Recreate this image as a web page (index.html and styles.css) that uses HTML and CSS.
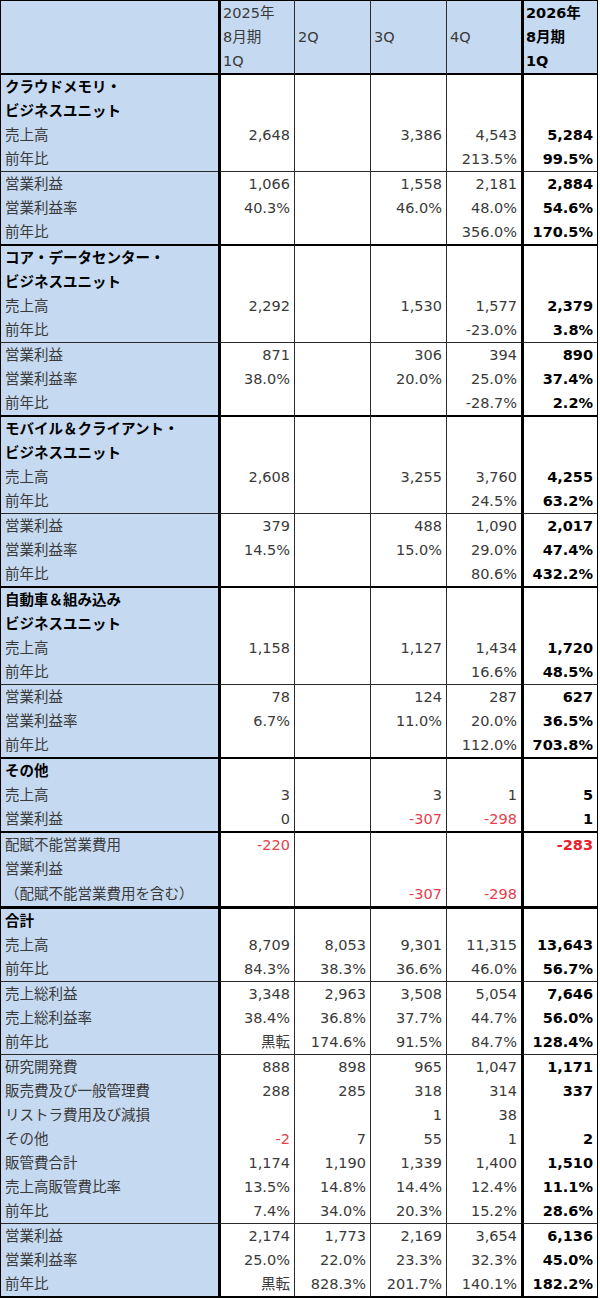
FILE: index.html
```html
<!DOCTYPE html>
<html lang="ja">
<head>
<meta charset="utf-8">
<title>セグメント別業績</title>
<link rel="stylesheet" href="styles.css">
</head>
<body>
<table class="fin">
  <colgroup>
    <col class="w-lab"><col class="w-c1"><col class="w-c2"><col class="w-c3"><col class="w-c4"><col class="w-c5">
  </colgroup>
  <tr class="head">
    <td class="lab"></td>
    <td class="c1 hd">2025年<br>8月期<br>1Q</td>
    <td class="hd mid">2Q</td>
    <td class="hd mid">3Q</td>
    <td class="hd mid">4Q</td>
    <td class="c5 hd">2026年<br>8月期<br>1Q</td>
  </tr>

  <!-- クラウドメモリ -->
  <tr class="thick"><td class="lab b">クラウドメモリ・</td><td class="c1"></td><td></td><td></td><td></td><td class="c5"></td></tr>
  <tr><td class="lab b">ビジネスユニット</td><td class="c1"></td><td></td><td></td><td></td><td class="c5"></td></tr>
  <tr><td class="lab">売上高</td><td class="c1">2,648</td><td></td><td>3,386</td><td>4,543</td><td class="c5">5,284</td></tr>
  <tr><td class="lab">前年比</td><td class="c1"></td><td></td><td></td><td>213.5%</td><td class="c5">99.5%</td></tr>
  <tr class="thin"><td class="lab">営業利益</td><td class="c1">1,066</td><td></td><td>1,558</td><td>2,181</td><td class="c5">2,884</td></tr>
  <tr><td class="lab">営業利益率</td><td class="c1">40.3%</td><td></td><td>46.0%</td><td>48.0%</td><td class="c5">54.6%</td></tr>
  <tr><td class="lab">前年比</td><td class="c1"></td><td></td><td></td><td>356.0%</td><td class="c5">170.5%</td></tr>

  <!-- コア・データセンター -->
  <tr class="thick"><td class="lab b">コア・データセンター・</td><td class="c1"></td><td></td><td></td><td></td><td class="c5"></td></tr>
  <tr><td class="lab b">ビジネスユニット</td><td class="c1"></td><td></td><td></td><td></td><td class="c5"></td></tr>
  <tr><td class="lab">売上高</td><td class="c1">2,292</td><td></td><td>1,530</td><td>1,577</td><td class="c5">2,379</td></tr>
  <tr><td class="lab">前年比</td><td class="c1"></td><td></td><td></td><td>-23.0%</td><td class="c5">3.8%</td></tr>
  <tr class="thin"><td class="lab">営業利益</td><td class="c1">871</td><td></td><td>306</td><td>394</td><td class="c5">890</td></tr>
  <tr><td class="lab">営業利益率</td><td class="c1">38.0%</td><td></td><td>20.0%</td><td>25.0%</td><td class="c5">37.4%</td></tr>
  <tr><td class="lab">前年比</td><td class="c1"></td><td></td><td></td><td>-28.7%</td><td class="c5">2.2%</td></tr>

  <!-- モバイル -->
  <tr class="thick"><td class="lab b">モバイル＆クライアント・</td><td class="c1"></td><td></td><td></td><td></td><td class="c5"></td></tr>
  <tr><td class="lab b">ビジネスユニット</td><td class="c1"></td><td></td><td></td><td></td><td class="c5"></td></tr>
  <tr><td class="lab">売上高</td><td class="c1">2,608</td><td></td><td>3,255</td><td>3,760</td><td class="c5">4,255</td></tr>
  <tr><td class="lab">前年比</td><td class="c1"></td><td></td><td></td><td>24.5%</td><td class="c5">63.2%</td></tr>
  <tr class="thin"><td class="lab">営業利益</td><td class="c1">379</td><td></td><td>488</td><td>1,090</td><td class="c5">2,017</td></tr>
  <tr><td class="lab">営業利益率</td><td class="c1">14.5%</td><td></td><td>15.0%</td><td>29.0%</td><td class="c5">47.4%</td></tr>
  <tr><td class="lab">前年比</td><td class="c1"></td><td></td><td></td><td>80.6%</td><td class="c5">432.2%</td></tr>

  <!-- 自動車 -->
  <tr class="thick"><td class="lab b">自動車＆組み込み</td><td class="c1"></td><td></td><td></td><td></td><td class="c5"></td></tr>
  <tr><td class="lab b">ビジネスユニット</td><td class="c1"></td><td></td><td></td><td></td><td class="c5"></td></tr>
  <tr><td class="lab">売上高</td><td class="c1">1,158</td><td></td><td>1,127</td><td>1,434</td><td class="c5">1,720</td></tr>
  <tr><td class="lab">前年比</td><td class="c1"></td><td></td><td></td><td>16.6%</td><td class="c5">48.5%</td></tr>
  <tr class="thin"><td class="lab">営業利益</td><td class="c1">78</td><td></td><td>124</td><td>287</td><td class="c5">627</td></tr>
  <tr><td class="lab">営業利益率</td><td class="c1">6.7%</td><td></td><td>11.0%</td><td>20.0%</td><td class="c5">36.5%</td></tr>
  <tr><td class="lab">前年比</td><td class="c1"></td><td></td><td></td><td>112.0%</td><td class="c5">703.8%</td></tr>

  <!-- その他 -->
  <tr class="thick"><td class="lab b">その他</td><td class="c1"></td><td></td><td></td><td></td><td class="c5"></td></tr>
  <tr><td class="lab">売上高</td><td class="c1">3</td><td></td><td>3</td><td>1</td><td class="c5">5</td></tr>
  <tr><td class="lab">営業利益</td><td class="c1">0</td><td></td><td class="neg">-307</td><td class="neg">-298</td><td class="c5">1</td></tr>

  <!-- 配賦不能 -->
  <tr class="thick"><td class="lab">配賦不能営業費用</td><td class="c1 neg">-220</td><td></td><td></td><td></td><td class="c5 neg">-283</td></tr>
  <tr><td class="lab">営業利益</td><td class="c1"></td><td></td><td></td><td></td><td class="c5"></td></tr>
  <tr class="tall"><td class="lab">（配賦不能営業費用を含む）</td><td class="c1"></td><td></td><td class="neg">-307</td><td class="neg">-298</td><td class="c5"></td></tr>

  <!-- 合計 -->
  <tr class="thick big"><td class="lab b">合計</td><td class="c1"></td><td></td><td></td><td></td><td class="c5"></td></tr>
  <tr><td class="lab">売上高</td><td class="c1">8,709</td><td>8,053</td><td>9,301</td><td>11,315</td><td class="c5">13,643</td></tr>
  <tr><td class="lab">前年比</td><td class="c1">84.3%</td><td>38.3%</td><td>36.6%</td><td>46.0%</td><td class="c5">56.7%</td></tr>
  <tr class="thin"><td class="lab">売上総利益</td><td class="c1">3,348</td><td>2,963</td><td>3,508</td><td>5,054</td><td class="c5">7,646</td></tr>
  <tr><td class="lab">売上総利益率</td><td class="c1">38.4%</td><td>36.8%</td><td>37.7%</td><td>44.7%</td><td class="c5">56.0%</td></tr>
  <tr><td class="lab">前年比</td><td class="c1">黒転</td><td>174.6%</td><td>91.5%</td><td>84.7%</td><td class="c5">128.4%</td></tr>
  <tr class="thin"><td class="lab">研究開発費</td><td class="c1">888</td><td>898</td><td>965</td><td>1,047</td><td class="c5">1,171</td></tr>
  <tr><td class="lab">販売費及び一般管理費</td><td class="c1">288</td><td>285</td><td>318</td><td>314</td><td class="c5">337</td></tr>
  <tr><td class="lab">リストラ費用及び減損</td><td class="c1"></td><td></td><td>1</td><td>38</td><td class="c5"></td></tr>
  <tr><td class="lab">その他</td><td class="c1 neg">-2</td><td>7</td><td>55</td><td>1</td><td class="c5">2</td></tr>
  <tr><td class="lab">販管費合計</td><td class="c1">1,174</td><td>1,190</td><td>1,339</td><td>1,400</td><td class="c5">1,510</td></tr>
  <tr><td class="lab">売上高販管費比率</td><td class="c1">13.5%</td><td>14.8%</td><td>14.4%</td><td>12.4%</td><td class="c5">11.1%</td></tr>
  <tr><td class="lab">前年比</td><td class="c1">7.4%</td><td>34.0%</td><td>20.3%</td><td>15.2%</td><td class="c5">28.6%</td></tr>
  <tr class="thin"><td class="lab">営業利益</td><td class="c1">2,174</td><td>1,773</td><td>2,169</td><td>3,654</td><td class="c5">6,136</td></tr>
  <tr><td class="lab">営業利益率</td><td class="c1">25.0%</td><td>22.0%</td><td>23.3%</td><td>32.3%</td><td class="c5">45.0%</td></tr>
  <tr class="last"><td class="lab">前年比</td><td class="c1">黒転</td><td>828.3%</td><td>201.7%</td><td>140.1%</td><td class="c5">182.2%</td></tr>
</table>
</body>
</html>
```

FILE: styles.css
```css
html, body {
  margin: 0;
  padding: 0;
  background: #ffffff;
}

.fin {
  border-collapse: separate;
  border-spacing: 0;
  table-layout: fixed;
  width: 598px;
  font-family: "DejaVu Sans", "Noto Sans CJK JP", sans-serif;
  font-size: 14.5px;
  color: #3a3a3a;
}

.w-lab { width: 218px; }
.w-c1 { width: 76px; }
.w-c2 { width: 76px; }
.w-c3 { width: 76px; }
.w-c4 { width: 75px; }
.w-c5 { width: 77px; }

.fin td {
  box-sizing: border-box;
  height: 24px;
  line-height: 24px;
  padding: 0 4px 0 0;
  text-align: right;
  white-space: nowrap;
  overflow: hidden;
  border-left: 1px solid #2a2a2a;
  vertical-align: middle;
}

.fin td.lab {
  text-align: left;
  padding: 0 0 0 4px;
  background: #c5d9f1;
  border-left: 1px solid #000;
}

.fin td.c1 {
  border-left: 3px solid #000;
}

.fin td.c5 {
  border-left: 3px solid #000;
  border-right: 1px solid #000;
  font-weight: bold;
  color: #000;
}

.fin td.b {
  font-weight: bold;
  color: #000;
}

.fin td.neg {
  color: #e5404a;
}

.fin td.c5.neg {
  color: #e8202c;
}

.fin tr.head td {
  background: #c5d9f1;
  border-top: 1px solid #000;
  height: 73px;
  vertical-align: top;
}

.fin td.hd {
  text-align: left;
  padding: 0 0 0 2px;
}

.fin td.hd.mid {
  vertical-align: middle;
  padding-left: 3px;
}

.fin tr.thick td {
  border-top: 2px solid #000;
  height: 26px;
}

.fin tr.thick.big td {
  border-top: 3px solid #000;
  height: 27px;
}

.fin tr.tall td {
  height: 25px;
}

.fin tr.thin td {
  border-top: 1px solid #2a2a2a;
  height: 25px;
}

.fin tr.last td {
  border-bottom: 2px solid #000;
  height: 26px;
}
```
